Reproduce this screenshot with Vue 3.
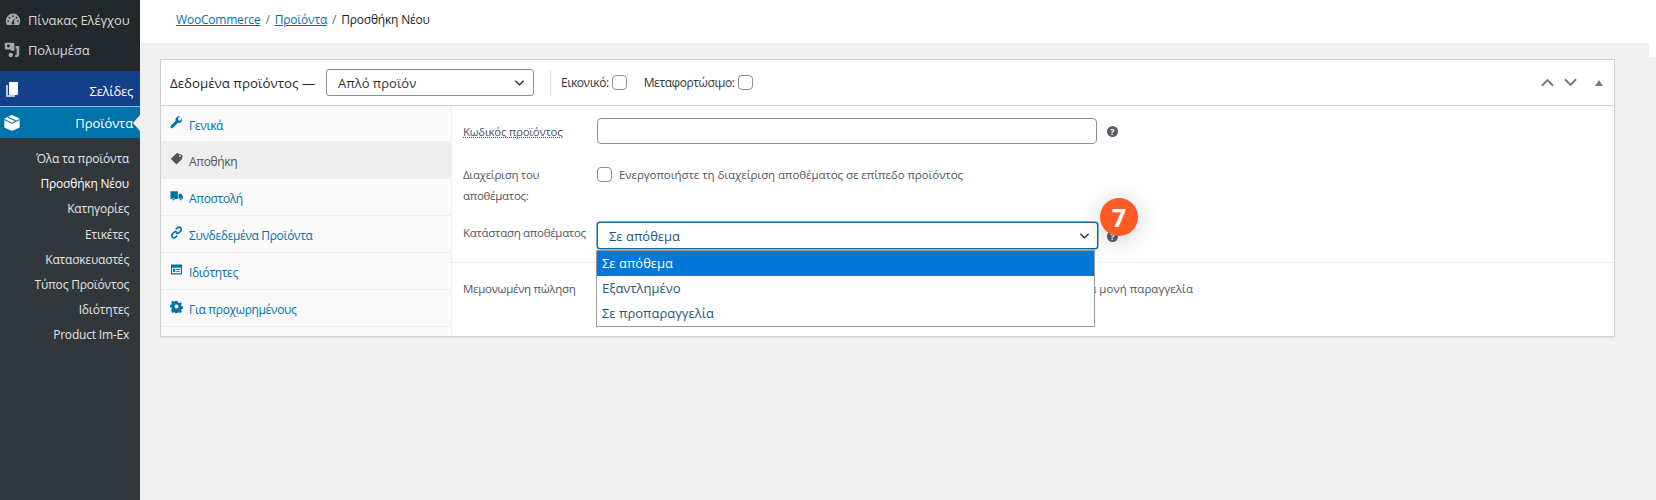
<script setup>
const subs = ['Όλα τα προϊόντα', 'Προσθήκη Νέου', 'Κατηγορίες', 'Ετικέτες', 'Κατασκευαστές', 'Τύπος Προϊόντος', 'Ιδιότητες', 'Product Im-Ex']
const tabs = [
  { label: 'Γενικά', icon: 'wrench' },
  { label: 'Αποθήκη', icon: 'tag', active: true },
  { label: 'Αποστολή', icon: 'truck' },
  { label: 'Συνδεδεμένα Προϊόντα', icon: 'link' },
  { label: 'Ιδιότητες', icon: 'card' },
  { label: 'Για προχωρημένους', icon: 'gear' }
]
const options = ['Σε απόθεμα', 'Εξαντλημένο', 'Σε προπαραγγελία']
</script>

<template>
  <div class="page">
    <aside class="side">
      <div class="dark">
        <div class="top">
          <svg class="ti" viewBox="0 0 20 20"><path fill="#a7aaad" d="M10 2a9 9 0 0 0-9 9c0 2 .7 3.900 1.800 5.400h14.400A9 9 0 0 0 19 11a9 9 0 0 0-9-9zM10 4.200a1.100 1.100 0 1 1 0 2.200 1.100 1.100 0 0 1 0-2.200zM5.600 6a1.100 1.100 0 1 1 0 2.200 1.100 1.100 0 0 1 0-2.200zM14.400 6a1.100 1.100 0 1 1 0 2.200 1.100 1.100 0 0 1 0-2.200zM4 10.200a1.100 1.100 0 1 1 0 2.200 1.100 1.100 0 0 1 0-2.200zM16 10.200a1.100 1.100 0 1 1 0 2.200 1.100 1.100 0 0 1 0-2.200zM11.800 7.500l-.6 5.200a1.800 1.800 0 1 1-2.300-.2z"/></svg>
          <span>Πίνακας Ελέγχου</span>
        </div>
        <div class="top">
          <svg class="ti media" viewBox="0 0 20 20"><path fill="#a7aaad" d="M1 1h10.500A1.500 1.500 0 0 1 13 2.500V11H9.500L8 9.500H3A2 2 0 0 1 1 7.500zM5.500 3.200a1.800 1.800 0 1 0 0 3.600 1.800 1.800 0 0 0 0-3.600zM14.500 5H19v11a3.500 3.500 0 0 1-3.500 3H14v-3h1.800V8h-1.300zM8.500 13.500a2.800 2.800 0 1 1 0 5.600 2.800 2.800 0 0 1 0-5.600z"/></svg>
          <span>Πολυμέσα</span>
        </div>
      </div>
      <div class="pages">
        <svg class="ti big" viewBox="0 0 20 20"><path fill="#bcd" d="M4 5h2v10h7v2H5a1 1 0 0 1-1-1z"/><path fill="#fff" d="M7 2h9v12a1 1 0 0 1-1 1H8a1 1 0 0 1-1-1z"/></svg>
        <span>Σελίδες</span>
      </div>
      <div class="products">
        <svg class="ti box" viewBox="0 0 20 20"><path fill="#fff" d="M10 1l8.500 4v10L10 19l-8.500-4V5z"/><path fill="none" stroke="#0073aa" stroke-width="1.200" d="M1.500 6.200 10 10.300l8.500-4.100M5.500 3.500 14 7.600"/></svg>
        <span>Προϊόντα</span>
        <i class="arrow"></i>
      </div>
      <nav class="subs">
        <div v-for="(s, i) in subs" :key="s" class="sub" :class="{ cur: i === 1 }">{{ s }}</div>
      </nav>
    </aside>

    <main class="main">
      <header class="crumbs">
        <a>WooCommerce</a><span class="sep">/</span><a>Προϊόντα</a><span class="sep">/</span><span>Προσθήκη Νέου</span>
      </header>

      <section class="panel">
        <div class="phead">
          <strong class="ptitle">Δεδομένα προϊόντος —</strong>
          <div class="sel type">
            <span>Απλό προϊόν</span>
            <svg class="chev" viewBox="0 0 12 8"><path d="M1.500 1.500 6 6l4.500-4.500" fill="none" stroke="#2c3338" stroke-width="1.500"/></svg>
          </div>
          <span class="vr"></span>
          <label class="opt">Εικονικό:<span class="cb"></span></label>
          <label class="opt second">Μεταφορτώσιμο:<span class="cb"></span></label>
          <div class="ctrls">
            <svg class="c1" viewBox="0 0 14 9"><path d="M1 8l6-6 6 6" fill="none" stroke="#72777c" stroke-width="2"/></svg>
            <svg class="c2" viewBox="0 0 14 9"><path d="M1 1l6 6 6-6" fill="none" stroke="#72777c" stroke-width="2"/></svg>
            <svg class="c3" viewBox="0 0 8 6"><path d="M4 0l4 6H0z" fill="#72777c"/></svg>
          </div>
        </div>

        <div class="pbody">
          <ul class="tabs">
            <li v-for="t in tabs" :key="t.label" class="tab" :class="{ active: t.active }">
              <svg class="tabi" viewBox="0 0 14 14">
                <path v-if="t.icon === 'wrench'" d="M13 2.800 10.800 5 9 4.500 8.500 2.700 10.800.6A3.800 3.800 0 0 0 6 5.200L1 10.400a1.400 1.400 0 0 0 2.200 2.200L8.500 7.500a3.800 3.800 0 0 0 4.500-4.700z"/>
                <path v-else-if="t.icon === 'tag'" d="M7.500 1 13.500 3.500 13 7.500 7 13.500.8 7.300zM10.800 3.300a.9.900 0 1 0 0 1.800.9.900 0 0 0 0-1.800z"/>
                <path v-else-if="t.icon === 'truck'" d="M.5 2.500h8v8.200H5a1.500 1.500 0 0 0-2.800 0H1.500a1 1 0 0 1-1-1zM9.300 5h2.500l2 2.500v3.200h-.8a1.500 1.500 0 0 0-2.800 0h-.9zM3.600 10.200a1 1 0 1 1 0 2 1 1 0 0 1 0-2zM11.600 10.200a1 1 0 1 1 0 2 1 1 0 0 1 0-2z"/>
                <g v-else-if="t.icon === 'link'" fill="none" stroke="currentColor" stroke-width="1.700">
                  <path d="M6.200 3.800 8 2a2.300 2.300 0 0 1 3.500 0 2.300 2.300 0 0 1 0 3.300L9.700 7.200a2.300 2.300 0 0 1-3.200 0"/>
                  <path d="M7.800 10.200 6 12a2.300 2.300 0 0 1-3.500 0 2.300 2.300 0 0 1 0-3.300l1.800-1.900a2.300 2.300 0 0 1 3.200 0"/>
                </g>
                <path v-else-if="t.icon === 'card'" fill-rule="evenodd" d="M1 1.500h12v11H1zM2.300 5v6h9.400V5zM3.300 6.300h2.400v3.400H3.300zM6.700 6.500h4v1h-4zM6.700 8.500h4v1h-4z"/>
                <path v-else fill-rule="evenodd" d="M5.800 1h2.400l.3 1.700 1.300.6 1.500-1 1.600 1.700-1 1.400.6 1.300 1.700.3v2.400l-1.700.3-.6 1.300 1 1.500-1.600 1.600-1.500-1-1.300.6-.3 1.700H5.800l-.3-1.700-1.300-.6-1.500 1L1.100 11l1-1.500-.6-1.300L0 7.900V5.500l1.500-.3.600-1.300-1-1.400L2.700.8l1.500 1 1.300-.6zM7 4.800a2.200 2.200 0 1 0 0 4.400 2.200 2.200 0 0 0 0-4.400z"/>
              </svg>
              <span>{{ t.label }}</span>
            </li>
          </ul>

          <div class="form">
            <div class="group">
              <div class="row r1">
                <span class="lbl"><span class="dotted">Κωδικός προϊόντος</span></span>
                <div class="input"></div>
                <span class="help">?</span>
              </div>
              <div class="row r2">
                <span class="lbl">Διαχείριση του αποθέματος:</span>
                <span class="cb mt"></span>
                <span class="txt">Ενεργοποιήστε τη διαχείριση αποθέματος σε επίπεδο προϊόντος</span>
              </div>
              <div class="row r3">
                <span class="lbl nowrap">Κατάσταση αποθέματος</span>
                <div class="sel stock">
                  <span>Σε απόθεμα</span>
                  <svg class="chev" viewBox="0 0 12 8"><path d="M1.500 1.500 6 6l4.500-4.500" fill="none" stroke="#2c3338" stroke-width="1.500"/></svg>
                  <ul class="drop">
                    <li v-for="(o, i) in options" :key="o" :class="{ on: i === 0 }">{{ o }}</li>
                  </ul>
                </div>
                <span class="help low">?</span>
                <span class="badge">7</span>
              </div>
            </div>
            <div class="row r4">
              <span class="lbl">Μεμονωμένη πώληση</span>
              <span class="cb"></span>
              <span class="txt">Ενεργοποιήστε το για να επιτρέπεται η αγορά μόνο ενός τεμαχίου του προϊόντος σε μια μονή παραγγελία</span>
            </div>
          </div>
        </div>
      </section>
    </main>
  </div>
</template>

<style>
html, body { margin: 0; background: #f0f0f0; }
</style>

<style scoped>
.page { display: flex; min-height: 500px; font-family: "Open Sans", "Noto Sans", sans-serif; font-size: 12px; letter-spacing: -.35px; color: #50575e; }
.side { width: 140px; flex: none; background: #32373c; color: #f0f0f0; letter-spacing: -.1px; }
.dark { background: #23282d; padding: 5px 0 6px; }
.top { height: 30px; display: flex; align-items: center; gap: 7px; padding-left: 5px; font-size: 13px; color: #d5d8da; }
.ti { width: 16px; height: 16px; flex: none; }
.media { margin-left: -1px; margin-right: 1px; }
.pages { height: 30px; padding: 5px 7px 0 5px; border-bottom: 1px solid #8fb7d3; background: #144089; display: flex; align-items: center; justify-content: space-between; font-size: 13px; letter-spacing: -.25px; color: #fff; box-sizing: content-box; }
.big { width: 20px; height: 20px; margin-top: -2px; margin-left: -3px; }
.products { position: relative; height: 31px; background: #0073aa; display: flex; align-items: center; justify-content: space-between; padding: 0 7px 0 3px; font-size: 13px; color: #fff; }
.box { width: 18px; height: 18px; }
.arrow { position: absolute; right: 0; top: 8px; border: 8px solid transparent; border-right-color: #f0f0f0; border-left-width: 0; border-right-width: 7px; }
.subs { padding-top: 8px; }
.sub { height: 25.200px; line-height: 25px; text-align: right; padding-right: 11px; font-size: 12px; letter-spacing: -.2px; color: #e3e5e6; }
.sub.cur { color: #fff; font-weight: 500; }

.main { flex: 1; min-width: 0; }
.crumbs { position: relative; height: 43px; box-sizing: border-box; background: #fff; padding: 0 0 5px 36px; display: flex; align-items: center; font-size: 12px; letter-spacing: -.2px; color: #1d2327; margin-bottom: 16px; }
.crumbs::after { content: ""; position: absolute; right: 0; top: 100%; width: 7px; height: 14px; background: #fff; }
.crumbs a { color: #0073aa; text-decoration: underline; }
.sep { margin: 0 5px; color: #646970; }

.panel { margin-left: 20px; width: 1455px; box-sizing: border-box; background: #fff; border: 1px solid #ccd0d4; box-shadow: 0 1px 1px rgba(0,0,0,.05); }
.phead { height: 45px; display: flex; align-items: center; padding-left: 9px; border-bottom: 1px solid #ccd0d4; }
.ptitle { width: 156px; flex: none; white-space: nowrap; font-size: 13.300px; font-weight: 500; letter-spacing: 0; color: #23282d; }
.sel { position: relative; box-sizing: border-box; display: flex; align-items: center; justify-content: space-between; background: #fff; border: 1px solid #8c8f94; border-radius: 3px; color: #2c3338; font-size: 13px; letter-spacing: 0; }
.type { width: 208px; height: 27px; padding: 0 8px 0 11px; }
.chev { width: 11px; height: 8px; flex: none; }
.vr { width: 1px; height: 26px; background: #ddd; margin: 0 10px 0 16px; }
.opt { display: flex; align-items: center; gap: 3px; color: #32373c; font-size: 12px; letter-spacing: -.42px; }
.second { margin-left: 17px; }
.cb { display: inline-block; box-sizing: border-box; width: 15px; height: 15px; flex: none; border: 1px solid #8c8f94; border-radius: 4px; background: #fff; }
.ctrls { margin-left: auto; display: flex; align-items: center; }
.c1, .c2 { width: 13px; height: 9px; }
.c2 { margin-left: 10px; }
.c3 { width: 8px; height: 6px; margin: 0 11px 0 18px; }

.pbody { display: flex; height: 230px; }
.tabs { list-style: none; margin: 0; padding: 0; width: 290px; flex: none; background: #fafafa; border-right: 1px solid #eee; box-sizing: content-box; }
.tab { height: 37px; box-sizing: border-box; display: flex; align-items: center; gap: 6px; padding: 3px 0 0 9px; border-bottom: 1px solid #eee; color: #0073aa; }
.tab:first-child { height: 36px; }
.tab.active { background: #eee; color: #555; }
.tabi { width: 13px; height: 13px; flex: none; fill: currentColor; margin-top: -6px; }

.form { flex: 1; min-width: 0; font-size: 11.500px; letter-spacing: -.07px; }
.group { height: 157px; box-sizing: border-box; padding-top: 12px; border-bottom: 1px solid #eee; }
.row { display: flex; position: relative; padding-left: 11px; }
.lbl { width: 134px; flex: none; line-height: 21px; letter-spacing: -.3px; color: #50575e; }
.nowrap { white-space: nowrap; }
.dotted { text-decoration: underline dotted; }
.r1 { height: 26px; align-items: center; }
.input { box-sizing: border-box; width: 500px; height: 26px; border: 1px solid #8c8f94; border-radius: 4px; background: #fff; }
.help { width: 11px; height: 11px; margin-left: 10px; border-radius: 50%; background: #555d66; color: #fff; font-size: 9px; font-weight: 700; line-height: 11px; letter-spacing: 0; text-align: center; flex: none; }
.r2 { margin-top: 20px; height: 52px; }
.mt { margin-top: 3px; }
.txt { margin-left: 7px; line-height: 21px; color: #50575e; }
.r3 { height: 27px; margin-top: 6px; }
.r3 .lbl { line-height: 22px; }
.stock { width: 501px; height: 27px; border: 1.500px solid #0e6b9b; padding: 0 7px 0 11px; color: #1d5a7c; box-shadow: 0 0 0 .5px #0e6b9b; }
.drop { position: absolute; z-index: 2; left: -2px; top: 26.500px; width: 499px; box-sizing: border-box; margin: 0; padding: 0; list-style: none; background: #fff; border: 1px solid #999; font-size: 13px; color: #1d5a7c; }
.drop li { height: 25.300px; line-height: 25px; padding-left: 5px; }
.drop li.on { background: #0078d7; color: #fff; }
.low { margin-top: 9px; margin-left: 9px; }
.badge { position: absolute; left: 648px; top: -24px; width: 38px; height: 38px; border-radius: 50%; background: #ff5a23; color: #fff; font-size: 25px; font-weight: 700; line-height: 38px; letter-spacing: 0; text-align: center; box-shadow: 0 4px 24px rgba(0,0,0,.2); }
.r4 { padding-top: 15px; }
.r4 .cb { margin-top: 3px; }
.r4 .txt { letter-spacing: .04px; }
</style>
